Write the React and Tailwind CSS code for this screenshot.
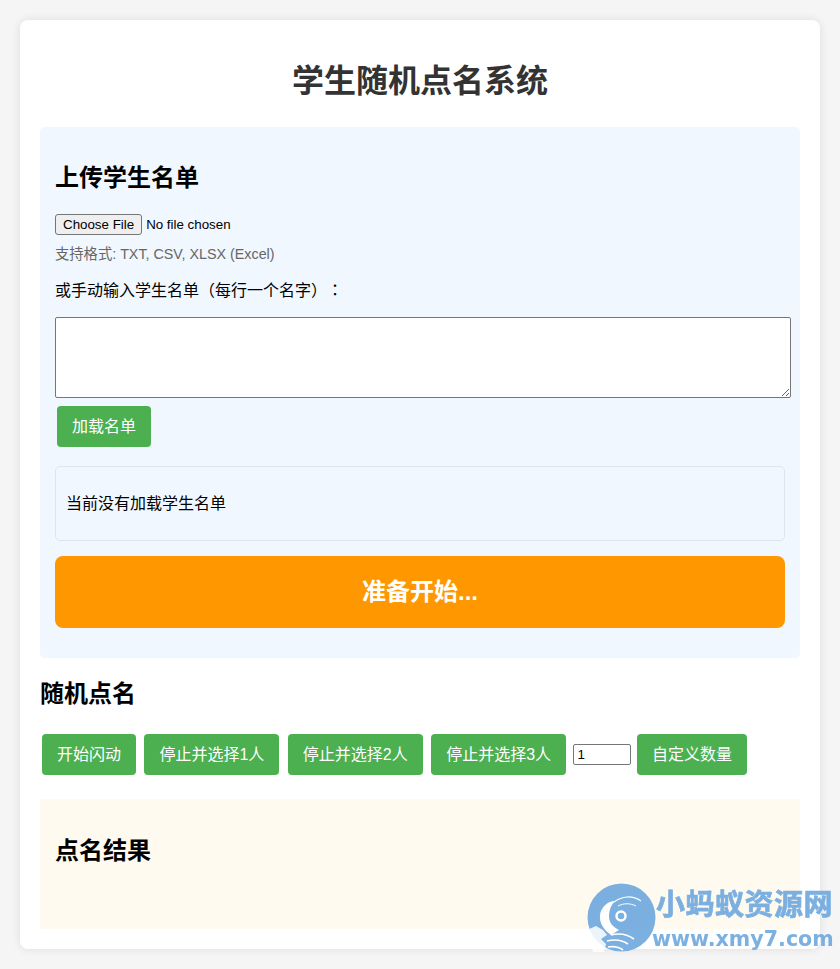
import React from 'react';

const FONT = 'font-["Liberation_Sans","Noto_Sans_CJK_SC",sans-serif]';
const BTN = 'inline-block m-[2px] px-[15px] py-[10px] text-[16px] leading-[21px] text-white bg-[#4caf50] rounded-[4px]';

const Watermark = () => (
    <div className="absolute left-[587px] top-[883px] w-[250px] h-[70px] opacity-95 blur-[0.3px] pointer-events-none">
        <svg className="absolute left-0 top-0" width="69" height="69" viewBox="0 0 69 69">
            <circle cx="34.5" cy="34.5" r="34" fill="#74ace0" />
            {/* cut-out at lower left */}
            <path d="M0 47l9-4 7 4 4 5-6 4 5 5-2 8H6z" fill="#fff" fillOpacity="0.85" />
            {/* head */}
            <path d="M13 32c1-8 8-14 15-14-4 4-6 9-6 15 0 7 4 11 10 14l-8 5C17 47 12 40 13 32z" fill="#fff" />
            <path d="M27 19c8-6 18-7 27-1" fill="none" stroke="#fff" strokeWidth="1.2" />
            <path d="M31 23c6-3 12-3 18 0" fill="none" stroke="#fff" strokeWidth="1" />
            <circle cx="34" cy="33" r="4.5" fill="none" stroke="#fff" strokeWidth="2.5" />
            {/* body */}
            <path d="M24 52c8-2 16-1 23 4M20 58c8-2 15-1 21 3M21 64c6-1 11 0 15 3" fill="none" stroke="#fff" strokeWidth="1.6" />
        </svg>
        <div className="absolute left-[69px] top-[2px] w-[180px] text-[29px] leading-[40px] font-bold tracking-[0.5px] whitespace-nowrap text-[#74ace0] [-webkit-text-stroke:0.7px_#74ace0]">小蚂蚁资源网</div>
        <div className="absolute left-[65px] top-[43px] w-[185px] text-[20.6px] leading-[26px] font-bold whitespace-nowrap text-[#74ace0] font-['DejaVu_Sans',sans-serif]">www.xmy7.com</div>
    </div>
);

const App = () => {
    return (
        <div className={`relative min-h-screen bg-[#f5f5f5] p-5 text-[16px] text-black [text-spacing-trim:space-all] ${FONT}`}>
            <div className="bg-white rounded-[8px] p-5 shadow-[0_0_10px_rgba(0,0,0,0.1)]">
                <h1 className="text-[32px] leading-[37px] font-bold text-[#333] text-center mt-[3px] pt-[20px] mb-[27px]">学生随机点名系统</h1>

                <div className="bg-[#f0f7ff] rounded-[5px] p-[15px] pb-[30px]">
                    <h2 className="text-[24px] leading-[28px] font-bold mt-[22px] mb-[22px]">上传学生名单</h2>
                    <input type="file" className="block text-[13.333px] leading-[17px] h-[21px] file:bg-[#efefef] file:border file:border-solid file:border-[#767676] file:rounded-[3px] file:px-[7px] file:py-[1px] file:mr-[4px] file:h-[21px] file:text-[13.333px]" />
                    <p className="text-[14.3px] leading-[18px] text-[#666] mt-[10px]">支持格式: TXT, CSV, XLSX (Excel)</p>
                    <p className="leading-[18px] mt-[19px]">或手动输入学生名单（每行一个名字）<span className="font-['Liberation_Sans','Noto_Sans_CJK_TC',sans-serif]">：</span></p>
                    <textarea className="block w-[736px] h-[81px] mt-[17px] bg-white border border-[#767676] rounded-[2px]" />
                    <button className={`${BTN} mt-[8px]`}>加载名单</button>
                    <div className="mt-[17px] h-[75px] flex items-center px-[10px] border border-[#dde6f0] rounded-[5px] bg-[#f0f7ff]">当前没有加载学生名单</div>
                    <div className="mt-[15px] h-[72px] flex items-center justify-center rounded-[8px] bg-[#ff9800] text-white text-[24px] font-bold">准备开始...</div>
                </div>

                <h2 className="text-[24px] leading-[28px] font-bold mt-[22px] mb-[24px]">随机点名</h2>
                <div className="flex items-center gap-[4.45px]">
                    <button className={BTN}>开始闪动</button>
                    <button className={BTN}>停止并选择1人</button>
                    <button className={BTN}>停止并选择2人</button>
                    <button className={BTN}>停止并选择3人</button>
                    <input type="number" defaultValue="1" className="w-[58px] h-[21px] ml-[1px] -mr-[1px] px-[3px] text-[13.333px] bg-white border border-[#767676] rounded-[2px]" />
                    <button className={BTN}>自定义数量</button>
                </div>

                <div className="bg-[#fffaf0] p-[15px] mt-[22px] h-[130px]">
                    <h2 className="text-[24px] leading-[28px] font-bold mt-[23px]">点名结果</h2>
                </div>
            </div>
            <Watermark />
        </div>
    );
};

export default App;
